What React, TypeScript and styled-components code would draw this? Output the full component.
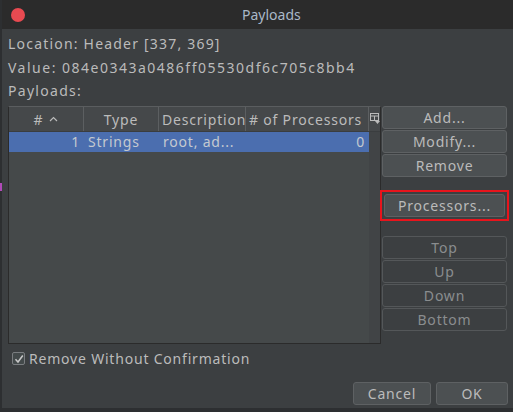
import React from 'react';
import styled, { createGlobalStyle } from 'styled-components';

const GlobalStyle = createGlobalStyle`
  html, body {
    margin: 0;
    padding: 0;
    background: #2b2d2e;
  }
  * {
    box-sizing: border-box;
  }
`;

const font = `'Noto Sans', 'Open Sans', sans-serif`;

const Desktop = styled.div`
  width: 513px;
  height: 412px;
  display: flex;
  padding-left: 2px;
  background: #2d2f31;
  position: relative;
  overflow: hidden;
`;

const DesktopMark = styled.div`
  position: absolute;
  left: 0;
  top: 183px;
  width: 2px;
  height: 8px;
  background: #b04ab8;
`;

const Window = styled.div`
  flex: 1;
  height: 408px;
  display: flex;
  flex-direction: column;
  background: #3c3f41;
  font-family: ${font};
  font-size: 14px;
  letter-spacing: 0.8px;
  color: #bbbbbb;
`;

const TitleBar = styled.div`
  height: 29px;
  flex: none;
  display: flex;
  align-items: center;
  padding-left: 9px;
  background: #2b2b2b;
`;

const CloseDot = styled.div`
  width: 14px;
  height: 14px;
  border-radius: 50%;
  background: #e94a51;
`;

const Title = styled.div`
  margin-left: 217px;
  font-size: 14px;
  letter-spacing: 0;
  color: #a9b8c8;
`;

const Body = styled.div`
  flex: 1;
  display: flex;
  flex-direction: column;
  padding: 3px 0 0 6px;
`;

const InfoLine = styled.div<{ $spacing?: number }>`
  height: 23.5px;
  line-height: 23.5px;
  white-space: nowrap;
  letter-spacing: ${p => p.$spacing ?? 1.3}px;
`;

const MainRow = styled.div`
  display: flex;
  margin-top: 3px;
  gap: 1px;
`;

const Table = styled.div`
  width: 373px;
  height: 238px;
  display: flex;
  flex-direction: column;
  border: 1px solid #2b2b2b;
  border-top-color: #5a5d5f;
  background: #45494a;
`;

const HeaderRow = styled.div`
  height: 25px;
  display: grid;
  grid-template-columns: 75px 75px 87px 123px 1fr;
  border-bottom: 1px solid #3a3d3f;
  background: #45484a;
`;

const HeaderCell = styled.div<{ $align?: 'left' | 'center' }>`
  display: flex;
  align-items: center;
  justify-content: ${p => (p.$align === 'left' ? 'flex-start' : 'center')};
  padding: 1px 3px 0;
  border-right: 1px solid #5c5f61;
  white-space: nowrap;
  overflow: hidden;
  gap: 6px;
`;

const CornerCell = styled.div`
  display: flex;
  align-items: center;
  justify-content: center;
`;

const BodyArea = styled.div`
  flex: 1;
  display: grid;
  grid-template-columns: 1fr 11px;
`;

const Rows = styled.div`
  display: flex;
  flex-direction: column;
`;

const ScrollTrack = styled.div`
  background: #414446;
`;

const DataRow = styled.div<{ $selected?: boolean }>`
  height: 20px;
  display: grid;
  grid-template-columns: 75px 75px 87px 123px;
  background: ${p => (p.$selected ? '#4b6eaf' : 'transparent')};
  color: #c4c9d0;
`;

const DataCell = styled.div<{ $right?: boolean }>`
  display: flex;
  align-items: center;
  justify-content: ${p => (p.$right ? 'flex-end' : 'flex-start')};
  padding: 0 4px;
  white-space: nowrap;
  overflow: hidden;
`;

const ButtonColumn = styled.div`
  width: 125px;
  display: flex;
  flex-direction: column;
`;

const ButtonGroup = styled.div<{ $top?: number }>`
  display: flex;
  flex-direction: column;
  gap: 1px;
  margin-top: ${p => p.$top ?? 0}px;
`;

const Button = styled.button<{ $disabled?: boolean; $w?: number }>`
  height: 23px;
  width: ${p => (p.$w ? `${p.$w}px` : '100%')};
  padding: 1px 0 0;
  border-radius: 3px;
  border: 1px solid ${p => (p.$disabled ? '#545759' : '#5e6163')};
  background: ${p => (p.$disabled ? '#3c3f41' : '#4c5052')};
  color: ${p => (p.$disabled ? '#8a8d8f' : '#bbbbbb')};
  font-family: ${font};
  font-size: 14px;
  letter-spacing: 0.8px;
  line-height: 1;
  cursor: default;
`;

const FocusRing = styled.div`
  margin: 13px -2px 0 -2px;
  padding: 2px;
  border: 2px solid #e8141c;
`;

const CheckRow = styled.label`
  display: flex;
  align-items: center;
  gap: 4px;
  margin-top: 8px;
  padding-left: 4px;
  height: 14px;
`;

const CheckBox = styled.span`
  width: 13px;
  height: 13px;
  border: 1px solid #7a7d80;
  border-radius: 2px;
  background: #43494a;
  display: flex;
  align-items: center;
  justify-content: center;
`;

const Footer = styled.div`
  display: flex;
  justify-content: flex-end;
  gap: 5px;
  margin-top: 16px;
  padding-right: 5px;
`;

export default function App() {
  return (
    <>
      <GlobalStyle />
      <Desktop>
        <DesktopMark />
        <Window>
          <TitleBar>
            <CloseDot />
            <Title>Payloads</Title>
          </TitleBar>
          <Body>
            <InfoLine $spacing={1.2}>Location: Header [337, 369]</InfoLine>
            <InfoLine $spacing={1.5}>Value: 084e0343a0486ff05530df6c705c8bb4</InfoLine>
            <InfoLine>Payloads:</InfoLine>
            <MainRow>
              <Table>
                <HeaderRow>
                  <HeaderCell>
                    <span>#</span>
                    <svg width="9" height="6" viewBox="0 0 9 6">
                      <path d="M1 5 L4.5 1.5 L8 5" fill="none" stroke="#bbbbbb" strokeWidth="1.2" />
                    </svg>
                  </HeaderCell>
                  <HeaderCell>Type</HeaderCell>
                  <HeaderCell $align="left">Description</HeaderCell>
                  <HeaderCell $align="left"># of Processors</HeaderCell>
                  <CornerCell>
                    <svg width="10" height="11" viewBox="0 0 10 11">
                      <rect x="0.5" y="0.5" width="8" height="7" fill="none" stroke="#bbbbbb" />
                      <line x1="0.5" y1="3" x2="8.5" y2="3" stroke="#bbbbbb" />
                      <line x1="4.5" y1="3" x2="4.5" y2="7.5" stroke="#bbbbbb" />
                      <path d="M5 8 L10 8 L7.5 11 Z" fill="#bbbbbb" />
                    </svg>
                  </CornerCell>
                </HeaderRow>
                <BodyArea>
                  <Rows>
                    <DataRow $selected>
                      <DataCell $right>1</DataCell>
                      <DataCell>Strings</DataCell>
                      <DataCell>root, ad...</DataCell>
                      <DataCell $right>0</DataCell>
                    </DataRow>
                  </Rows>
                  <ScrollTrack />
                </BodyArea>
              </Table>
              <ButtonColumn>
                <ButtonGroup>
                  <Button>Add...</Button>
                  <Button>Modify...</Button>
                  <Button>Remove</Button>
                </ButtonGroup>
                <FocusRing>
                  <Button>Processors...</Button>
                </FocusRing>
                <ButtonGroup $top={15}>
                  <Button $disabled>Top</Button>
                  <Button $disabled>Up</Button>
                  <Button $disabled>Down</Button>
                  <Button $disabled>Bottom</Button>
                </ButtonGroup>
              </ButtonColumn>
            </MainRow>
            <CheckRow>
              <CheckBox>
                <svg width="10" height="10" viewBox="0 0 10 10">
                  <path d="M1.5 5.2 L4 8 L8.8 1.5" fill="none" stroke="#c8c8c8" strokeWidth="1.5" />
                </svg>
              </CheckBox>
              <span>Remove Without Confirmation</span>
            </CheckRow>
            <Footer>
              <Button $w={78}>Cancel</Button>
              <Button $w={72}>OK</Button>
            </Footer>
          </Body>
        </Window>
      </Desktop>
    </>
  );
}
